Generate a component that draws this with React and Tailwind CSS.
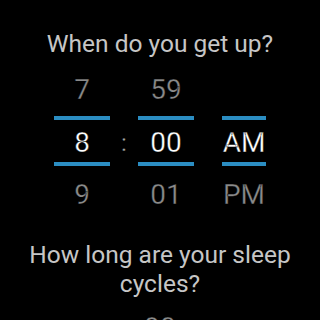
export default function App() {
  return (
    <div className="w-[320px] h-[320px] bg-black overflow-hidden flex flex-col items-center font-['Roboto','Liberation_Sans',sans-serif]">
      <div className="mt-[29px] text-[24.5px] leading-[30px] text-[#c6c6c6] text-center whitespace-nowrap">When do you get up?</div>
      <div className="mt-[4px] flex flex-col text-[28px] leading-none [-webkit-text-stroke:0.35px_black]">
        <div className="flex h-[53px] items-center text-[#8a8a8a]">
          <div className="w-[56px] text-center">7</div>
          <div className="w-[28px]"></div>
          <div className="w-[56px] text-center">59</div>
          <div className="w-[28px]"></div>
          <div className="w-[44px] text-center"></div>
        </div>
        <div className="flex h-[50px] text-white">
          <div className="w-[56px] border-y-4 border-[#2b8dc2] flex items-center justify-center pt-[3px]">8</div>
          <div className="w-[28px] flex items-center justify-center pt-[3px] text-[#a8a8a8] text-[24px]">:</div>
          <div className="w-[56px] border-y-4 border-[#2b8dc2] flex items-center justify-center pt-[3px]">00</div>
          <div className="w-[28px]"></div>
          <div className="w-[44px] border-y-4 border-[#2b8dc2] flex items-center justify-center pt-[3px]">AM</div>
        </div>
        <div className="flex h-[58px] items-center text-[#8a8a8a]">
          <div className="w-[56px] text-center">9</div>
          <div className="w-[28px]"></div>
          <div className="w-[56px] text-center">01</div>
          <div className="w-[28px]"></div>
          <div className="w-[44px] text-center">PM</div>
        </div>
      </div>
      <div className="mt-[16px] text-[24.5px] leading-[29px] text-[#c6c6c6] text-center w-[300px]">How long are your sleep cycles?</div>
      <div className="mt-[16px] text-[28px] leading-none [-webkit-text-stroke:0.35px_black] text-[#8a8a8a]">90</div>
    </div>
  );
}
